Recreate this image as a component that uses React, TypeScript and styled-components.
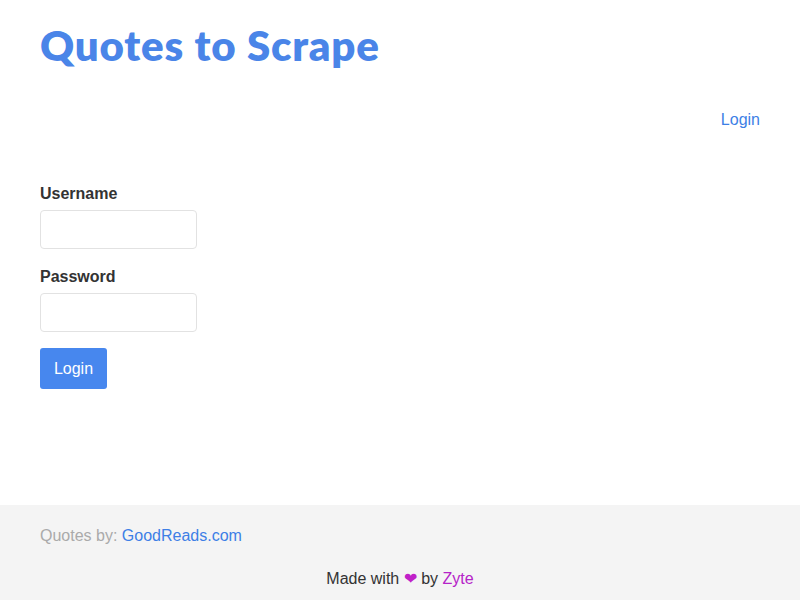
import React from "react";
import styled, { createGlobalStyle } from "styled-components";

const Global = createGlobalStyle`
  html, body { margin: 0; padding: 0; }
  body {
    font-family: "Liberation Sans", Arial, sans-serif;
    font-size: 16px;
    color: #333;
    background: #fff;
  }
  * { box-sizing: border-box; }
`;

const Page = styled.div`
  display: flex;
  flex-direction: column;
  min-height: 600px;
`;

const Container = styled.div`
  width: 720px;
  margin: 0 auto;
`;

const Header = styled.header`
  display: flex;
  flex-direction: column;
  padding-top: 20px;
`;

const Title = styled.h1`
  margin: 0;
  font-family: "Lato", "Noto Sans", sans-serif;
  font-weight: 800;
  font-size: 42px;
  line-height: 50px;
  color: #4a85e8;
  letter-spacing: 0.8px;
`;

const NavRow = styled.div`
  display: flex;
  justify-content: flex-end;
  margin-top: 41px;
`;

const Link = styled.a<{ $color?: string }>`
  color: ${(p) => p.$color || "#3d7fe6"};
  text-decoration: none;
  font-size: 16px;
`;

const Form = styled.form`
  display: flex;
  flex-direction: column;
  margin-top: 56px;
  width: 157px;
`;

const Group = styled.div`
  display: flex;
  flex-direction: column;
  gap: 7px;
  margin-bottom: 19px;
`;

const Label = styled.label`
  font-weight: bold;
  font-size: 16px;
  line-height: 18px;
  color: #333;
`;

const Input = styled.input`
  width: 157px;
  height: 39px;
  border: 1px solid #e2e2e2;
  border-radius: 4px;
  background: #fff;
`;

const Button = styled.button`
  align-self: flex-start;
  width: 67px;
  height: 41px;
  border: none;
  border-radius: 3px;
  background: #4787ee;
  color: #fff;
  font-family: "Liberation Sans", Arial, sans-serif;
  font-size: 16px;
  margin-top: -3px;
`;

const Footer = styled.footer`
  margin-top: auto;
  background: #f4f4f4;
  height: 95px;
  padding-top: 21px;
`;

const Credit = styled.div`
  color: #aaa;
  font-size: 16px;
  line-height: 20px;
`;

const Made = styled.div`
  text-align: center;
  margin-top: 23px;
  font-size: 16px;
  line-height: 20px;
  color: #333;
`;

const Heart = styled.span`
  color: #c021c8;
`;

export default function App() {
  return (
    <Page>
      <Global />
      <Container>
        <Header>
          <Title>Quotes to Scrape</Title>
          <NavRow>
            <Link href="#">Login</Link>
          </NavRow>
        </Header>
        <Form onSubmit={(e) => e.preventDefault()}>
          <Group>
            <Label htmlFor="username">Username</Label>
            <Input id="username" type="text" />
          </Group>
          <Group>
            <Label htmlFor="password">Password</Label>
            <Input id="password" type="password" />
          </Group>
          <Button type="submit">Login</Button>
        </Form>
      </Container>
      <Footer>
        <Container>
          <Credit>
            Quotes by: <Link href="#">GoodReads.com</Link>
          </Credit>
        </Container>
        <Made>
          Made with <Heart>❤</Heart> by <Link href="#" $color="#b523c8">Zyte</Link>
        </Made>
      </Footer>
    </Page>
  );
}
